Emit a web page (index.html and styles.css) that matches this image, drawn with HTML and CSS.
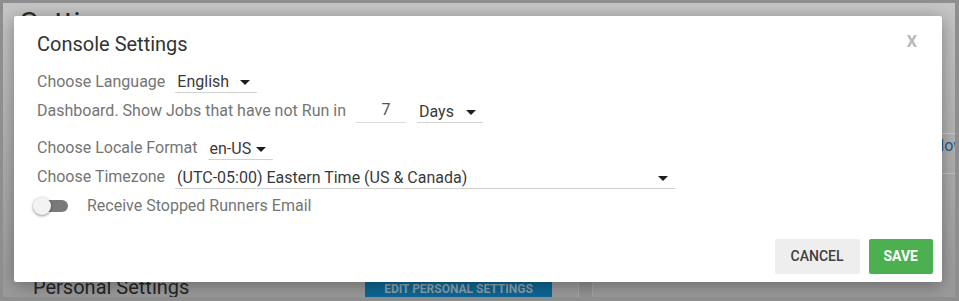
FILE: index.html
```html
<!DOCTYPE html>
<html lang="en">
<head>
  <meta charset="UTF-8">
  <meta name="viewport" content="width=device-width, initial-scale=1.0">
  <title>Console Settings</title>
  <link rel="stylesheet" href="styles.css">
</head>
<body>
  <div class="frame">
    <div class="page">
      <h1 class="page-title">Settings</h1>
      <div class="page-row"><span class="page-link">Allow</span></div>
      <div class="page-foot">
        <h2>Personal Settings</h2>
        <button class="edit-btn">EDIT PERSONAL SETTINGS</button>
        <span class="scroll-box"></span>
      </div>
    </div>

    <div class="modal">
      <div class="modal-head">
        <h3 class="modal-title">Console Settings</h3>
        <span class="close">X</span>
      </div>

      <div class="fields">
        <div class="field-row">
          <span class="field-label first">Choose Language</span>
          <span class="select select-lang">English<i class="caret"></i></span>
        </div>
        <div class="field-row row-jobs">
          <span class="field-label">Dashboard. Show Jobs that have not Run in</span>
          <span class="num-input">7</span>
          <span class="select select-days">Days<i class="caret"></i></span>
        </div>
        <div class="field-row">
          <span class="field-label">Choose Locale Format</span>
          <span class="select select-locale">en-US<i class="caret"></i></span>
        </div>
        <div class="field-row">
          <span class="field-label">Choose Timezone</span>
          <span class="select select-zone">(UTC-05:00) Eastern Time (US &amp; Canada)<i class="caret"></i></span>
        </div>
        <div class="field-row row-toggle">
          <span class="toggle"><span class="track"></span><span class="knob"></span></span>
          <span class="toggle-label">Receive Stopped Runners Email</span>
        </div>
      </div>

      <div class="modal-foot">
        <button class="btn btn-cancel">Cancel</button>
        <button class="btn btn-save">Save</button>
      </div>
    </div>
  </div>
</body>
</html>
```

FILE: styles.css
```css
body {
  margin: 0;
  font-family: Roboto, "Liberation Sans", sans-serif;
}
.frame {
  position: relative;
  box-sizing: border-box;
  width: 959px;
  height: 301px;
  border: solid #8e8e8e;
  border-width: 3px 4px 4px 3px;
  background: linear-gradient(#c6c6c6, #9a9a9a);
  overflow: hidden;
}
.page {
  height: 100%;
  display: flex;
  flex-direction: column;
}
.page-title {
  margin: 0;
  padding: 2px 0 0 17px;
  font-size: 30px;
  line-height: 36px;
  font-weight: 400;
  color: #2b2b2b;
}
.page-row {
  margin: 92px 0 0 600px;
  height: 39px;
  border-top: 1px solid #cdcdcd;
  border-bottom: 1px solid #c4c4c4;
  padding-left: 323px;
  white-space: nowrap;
  overflow: hidden;
  font-size: 16px;
  line-height: 24px;
}
.page-link {
  color: #245a8c;
}
.page-foot {
  margin-top: auto;
  margin-bottom: -4px;
  height: 28px;
  display: flex;
  align-items: flex-start;
  padding-left: 30px;
}
.page-foot h2 {
  margin: 0;
  width: 332px;
  flex-shrink: 0;
  font-size: 20px;
  line-height: 28px;
  font-weight: 400;
  color: #262626;
}
.edit-btn {
  margin-top: 3px;
  width: 187px;
  height: 26px;
  padding: 0;
  border: 0;
  background: #0d6794;
  color: #8ba1ae;
  font: 700 12px/26px Roboto, "Liberation Sans", sans-serif;
}
.scroll-box {
  margin: 3px 0 0 26px;
  width: 13px;
  height: 22px;
  border: 1px solid #a6a6a6;
  background: #929292;
}

.modal {
  position: absolute;
  left: 11px;
  top: 13px;
  width: 928px;
  height: 266px;
  box-sizing: border-box;
  padding: 16px 9px 8px 23px;
  display: flex;
  flex-direction: column;
  background: #fff;
  border-radius: 2px;
  box-shadow: 0 3px 18px rgba(0, 0, 0, 0.35);
}
.modal-head {
  display: flex;
  justify-content: space-between;
  align-items: flex-start;
  padding-right: 16px;
}
.modal-title {
  margin: 0;
  font-size: 20px;
  line-height: 24px;
  font-weight: 400;
  color: #333;
}
.close {
  margin-top: -2px;
  font-size: 16px;
  line-height: 24px;
  font-weight: 700;
  color: #b8b8b8;
  cursor: pointer;
}
.fields {
  margin-top: 16px;
  display: flex;
  flex-direction: column;
  gap: 7px;
}
.field-row {
  display: flex;
  align-items: flex-end;
  gap: 10px;
  font-size: 16px;
  line-height: 20px;
}
.row-jobs {
  margin-bottom: 8px;
}
.field-label {
  padding-bottom: 2px;
  color: #757575;
}
.field-label.first {
  padding-bottom: 1px;
}
.select {
  box-sizing: border-box;
  display: flex;
  align-items: center;
  justify-content: space-between;
  padding: 0 7px 0 2px;
  border-bottom: 1px solid #d2d2d2;
  color: #3a3a3a;
}
.select-lang { width: 82px; }
.select-days { width: 66px; margin-left: 1px; }
.select-locale { width: 65px; }
.select-zone { width: 500px; }
.caret {
  width: 0;
  height: 0;
  border-left: 5px solid transparent;
  border-right: 5px solid transparent;
  border-top: 5px solid #1e1e1e;
}
.num-input {
  box-sizing: border-box;
  width: 50px;
  padding: 0 0 2px 10px;
  text-align: center;
  border-bottom: 1px solid #dcdcdc;
  color: #555;
}
.row-toggle {
  align-items: center;
}
.toggle {
  position: relative;
  margin-left: -5px;
  width: 36px;
  height: 20px;
}
.track {
  position: absolute;
  left: 2px;
  top: 4px;
  width: 34px;
  height: 12px;
  border-radius: 6px;
  background: #7a7a7a;
}
.knob {
  position: absolute;
  left: 1px;
  top: 1px;
  width: 18px;
  height: 18px;
  border-radius: 50%;
  background: #f3f3f3;
  box-shadow: 0 1px 3px rgba(0, 0, 0, 0.45);
}
.toggle-label {
  margin-left: 9px;
  color: #757575;
}
.modal-foot {
  margin-top: auto;
  display: flex;
  justify-content: flex-end;
  gap: 9px;
}
.btn {
  height: 35px;
  padding: 0 15px;
  border: 0;
  border-radius: 2px;
  font: 500 14px/35px Roboto, "Liberation Sans", sans-serif;
  text-transform: uppercase;
  cursor: pointer;
}
.btn-cancel {
  padding: 0 16px;
  background: #eeeeee;
  color: #3f3f3f;
}
.btn-save {
  background: #4caf50;
  color: #fff;
  font-weight: 700;
}
```
